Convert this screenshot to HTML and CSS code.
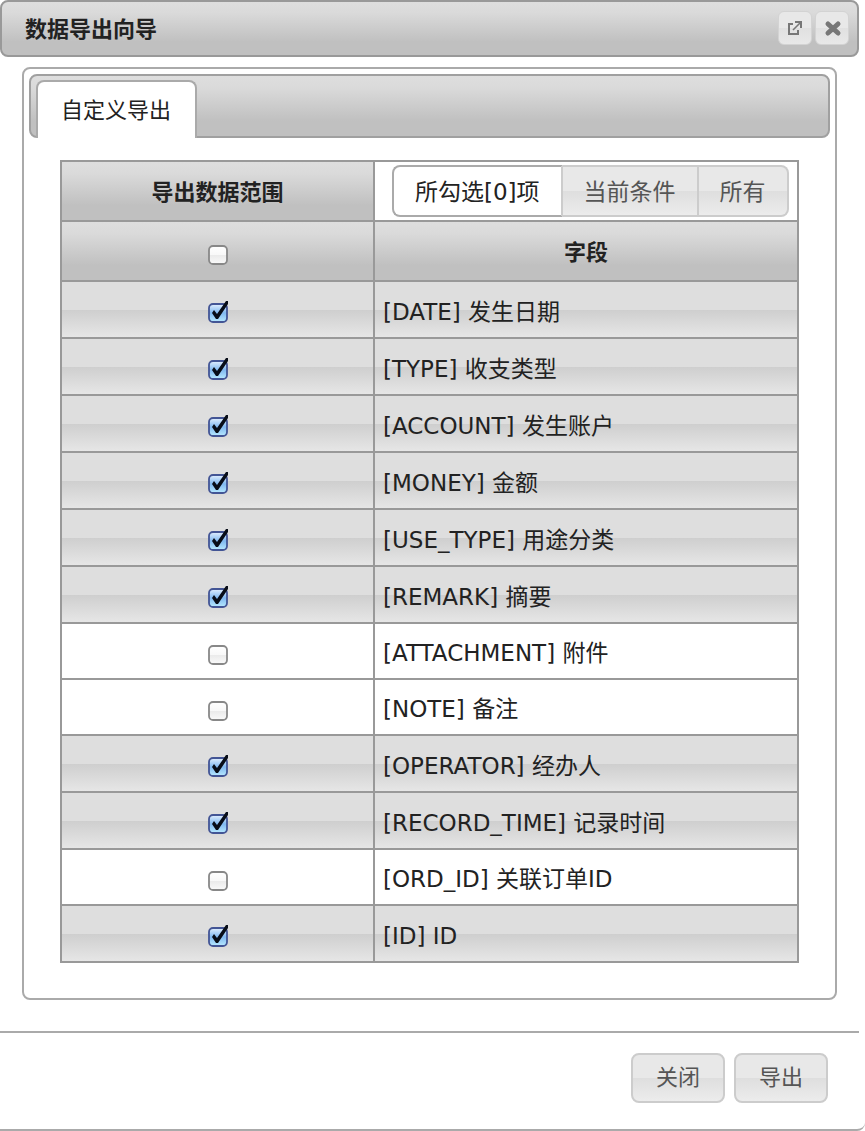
FILE: index.html
```html
<!DOCTYPE html>
<html lang="zh-CN">
<head>
    <meta charset="UTF-8">
    <meta name="viewport" content="width=device-width, initial-scale=1.0">
    <title>数据导出向导</title>
    <link rel="stylesheet" href="styles.css">
</head>
<body>

<div class="dialog">
    <div class="titlebar">
        <h1 class="title">数据导出向导</h1>
        <button type="button" class="icon-button" aria-label="最大化">
            <svg width="32" height="32" viewBox="0 0 32 32" fill="none" stroke="#777" stroke-width="2">
                <path d="M14 12H10V22H19V18"/>
                <path d="M14 18L22 10" stroke-width="1.6"/>
                <path d="M16 10H22V16"/>
            </svg>
        </button>
        <button type="button" class="icon-button" aria-label="关闭窗口">
            <svg width="32" height="32" viewBox="0 0 32 32" fill="none" stroke="#777" stroke-width="5" stroke-linecap="round">
                <path d="M12 12L22 21M22 12L12 21"/>
            </svg>
        </button>
    </div>

    <form id="exportForm">
        <div class="tabs">
            <div class="tab-nav">
                <a class="tab" href="#custom">自定义导出</a>
            </div>
            <div class="tab-panel" id="custom">
                <table class="fields">
                    <thead>
                        <tr>
                            <th class="check-col">导出数据范围</th>
                            <td class="range-cell">
                                <div class="button-set">
                                    <input type="radio" id="rangeChecked" name="range" checked>
                                    <label for="rangeChecked">所勾选[0]项</label>
                                    <input type="radio" id="rangeCurrent" name="range">
                                    <label for="rangeCurrent">当前条件</label>
                                    <input type="radio" id="rangeAll" name="range">
                                    <label for="rangeAll">所有</label>
                                </div>
                            </td>
                        </tr>
                        <tr>
                            <th class="check-col"><input type="checkbox" id="checkAll" aria-label="全选"></th>
                            <th>字段</th>
                        </tr>
                    </thead>
                    <tbody>
                        <tr class="selected">
                            <td class="check-col"><input type="checkbox" id="fDate" checked></td>
                            <td><label for="fDate">[DATE] 发生日期</label></td>
                        </tr>
                        <tr class="selected">
                            <td class="check-col"><input type="checkbox" id="fType" checked></td>
                            <td><label for="fType">[TYPE] 收支类型</label></td>
                        </tr>
                        <tr class="selected">
                            <td class="check-col"><input type="checkbox" id="fAccount" checked></td>
                            <td><label for="fAccount">[ACCOUNT] 发生账户</label></td>
                        </tr>
                        <tr class="selected">
                            <td class="check-col"><input type="checkbox" id="fMoney" checked></td>
                            <td><label for="fMoney">[MONEY] 金额</label></td>
                        </tr>
                        <tr class="selected">
                            <td class="check-col"><input type="checkbox" id="fUseType" checked></td>
                            <td><label for="fUseType">[USE_TYPE] 用途分类</label></td>
                        </tr>
                        <tr class="selected">
                            <td class="check-col"><input type="checkbox" id="fRemark" checked></td>
                            <td><label for="fRemark">[REMARK] 摘要</label></td>
                        </tr>
                        <tr>
                            <td class="check-col"><input type="checkbox" id="fAttachment"></td>
                            <td><label for="fAttachment">[ATTACHMENT] 附件</label></td>
                        </tr>
                        <tr>
                            <td class="check-col"><input type="checkbox" id="fNote"></td>
                            <td><label for="fNote">[NOTE] 备注</label></td>
                        </tr>
                        <tr class="selected">
                            <td class="check-col"><input type="checkbox" id="fOperator" checked></td>
                            <td><label for="fOperator">[OPERATOR] 经办人</label></td>
                        </tr>
                        <tr class="selected">
                            <td class="check-col"><input type="checkbox" id="fRecordTime" checked></td>
                            <td><label for="fRecordTime">[RECORD_TIME] 记录时间</label></td>
                        </tr>
                        <tr>
                            <td class="check-col"><input type="checkbox" id="fOrdId"></td>
                            <td><label for="fOrdId">[ORD_ID] 关联订单ID</label></td>
                        </tr>
                        <tr class="selected">
                            <td class="check-col"><input type="checkbox" id="fId" checked></td>
                            <td><label for="fId">[ID] ID</label></td>
                        </tr>
                    </tbody>
                </table>
            </div>
        </div>

        <div class="button-pane">
            <button type="button" class="button">关闭</button>
            <button type="submit" class="button">导出</button>
        </div>
    </form>
</div>

</body>
</html>
```
FILE: styles.css
```css
* {
    box-sizing: border-box;
}
body {
    margin: 0;
    background-color: #fff;
    color: #222;
    font-family: "DejaVu Sans", "Noto Sans CJK SC", sans-serif;
    font-size: 22px;
    line-height: 32px;
}
button {
    font: inherit;
    cursor: pointer;
}
.dialog {
    padding-right: 6px;
    border-bottom: 2px solid #aaa;
    border-bottom-right-radius: 8px;
}
.titlebar {
    display: flex;
    align-items: center;
    gap: 3px;
    height: 57px;
    padding: 0 8px 2px 23px;
    border: 2px solid #999;
    border-radius: 8px;
    background: linear-gradient(#dedede, #dadada 20%, #c0c0c0 75%, #c0c0c0);
}
.title {
    flex: 1;
    margin: 0;
    padding-top: 4px;
    font-size: 22px;
    line-height: 32px;
}
.icon-button {
    display: flex;
    padding: 0;
    border: 1px solid #d3d3d3;
    border-radius: 6px;
    background: linear-gradient(#e8e8e8 50%, #e0e0e0 50%, #e8e8e8);
}
.tabs {
    margin: 10px 22px 0;
    padding: 5px;
    border: 2px solid #aaa;
    border-radius: 8px;
}
.tab-nav {
    display: flex;
    align-items: flex-end;
    height: 64px;
    padding: 0 5px;
    border: 2px solid #a0a0a0;
    border-radius: 8px;
    background: linear-gradient(#dedede, #dadada 20%, #c0c0c0 75%, #c0c0c0);
}
.tab {
    margin-bottom: -2px;
    padding: 13px 24px 11px 23px;
    border: 2px solid #aaa;
    border-bottom: none;
    border-radius: 8px 8px 0 0;
    background-color: #fff;
    color: #222;
    text-decoration: none;
}
.tab-panel {
    padding: 22px 31px 30px;
}
.fields {
    width: 100%;
    border-collapse: collapse;
    table-layout: fixed;
}
.fields th, .fields td {
    height: 57px;
    padding: 4px 8px 0;
    border: 2px solid #999;
    text-align: left;
}
.fields td {
    font-size: 23px;
}
.fields tbody tr:not(.selected) td {
    height: 56px;
}
.fields th {
    height: 60px;
    background: linear-gradient(#dedede, #dadada 20%, #c0c0c0 75%, #c0c0c0);
    text-align: center;
}
.fields .check-col {
    width: 313px;
    text-align: center;
}
.fields td.check-col {
    padding-top: 2px;
}
.fields .selected td {
    background: linear-gradient(#dedede 50%, #cecece 50%, #e6e6e6);
}
.fields .range-cell {
    height: 60px;
    padding: 0 10px 0 17px;
}
.button-set {
    display: flex;
}
.button-set input {
    position: absolute;
    opacity: 0;
}
.button-set label {
    padding: 9px 21px 7px;
    border: 2px solid #ccc;
    border-left: none;
    background: linear-gradient(#e8e8e8 50%, #dedede 50%, #ececec);
    color: #555;
    white-space: nowrap;
}
.button-set label:first-of-type {
    border-left: 2px solid #ccc;
    border-radius: 8px 0 0 8px;
}
.button-set label:last-of-type {
    border-radius: 0 8px 8px 0;
}
.button-set input:checked + label {
    border-color: #aaa #ccc #aaa #aaa;
    background: #fff;
    color: #222;
}
input[type="checkbox"] {
    appearance: none;
    width: 22px;
    height: 24px;
    margin: 0;
    vertical-align: middle;
    background: url("data:image/svg+xml,%3Csvg xmlns='http://www.w3.org/2000/svg' width='22' height='24'%3E%3Cdefs%3E%3ClinearGradient id='g' x2='0' y2='1'%3E%3Cstop stop-color='%23fff'/%3E%3Cstop offset='.5' stop-color='%23f8f8f8'/%3E%3Cstop offset='.5' stop-color='%23eaeaea'/%3E%3Cstop offset='1' stop-color='%23fafafa'/%3E%3C/linearGradient%3E%3C/defs%3E%3Crect x='2' y='4' width='18' height='18' rx='4' fill='url(%23g)' stroke='%23888' stroke-width='1.8'/%3E%3C/svg%3E");
}
input[type="checkbox"]:checked {
    background: url("data:image/svg+xml,%3Csvg xmlns='http://www.w3.org/2000/svg' width='22' height='24'%3E%3Cdefs%3E%3ClinearGradient id='g' x2='0' y2='1'%3E%3Cstop stop-color='%23e3f0ff'/%3E%3Cstop offset='.5' stop-color='%2380b8f0'/%3E%3Cstop offset='1' stop-color='%23b8eaff'/%3E%3C/linearGradient%3E%3C/defs%3E%3Crect x='2' y='4' width='18' height='18' rx='4' fill='url(%23g)' stroke='%23435595' stroke-width='1.8'/%3E%3Cpath d='M5 13L7 10L10 14L19 1H21V4L11 19H9Z' fill='%23080d18'/%3E%3C/svg%3E");
}
.button-pane {
    display: flex;
    justify-content: flex-end;
    gap: 9px;
    margin-top: 31px;
    padding: 20px 31px 26px;
    border-top: 2px solid #aaa;
}
.button {
    padding: 7px 23px;
    border: 2px solid #ccc;
    border-radius: 8px;
    background: linear-gradient(#e8e8e8 50%, #dedede 50%, #ececec);
    color: #555;
}
```
